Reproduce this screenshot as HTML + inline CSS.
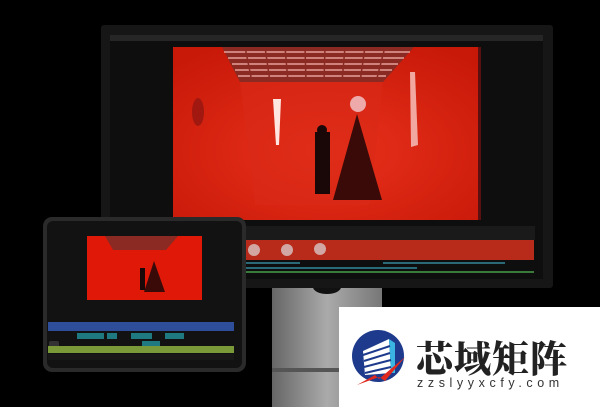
<!DOCTYPE html>
<html><head><meta charset="utf-8"><style>
html,body{margin:0;padding:0;background:#000;width:600px;height:407px;overflow:hidden}
.wm{position:absolute;left:339px;top:307px;width:261px;height:100px;background:#fff}
.t{position:absolute;left:416px;top:329px;font-family:"Liberation Serif","Noto Serif CJK SC",serif;font-weight:900;font-size:37px;color:#222;letter-spacing:1px;white-space:nowrap}
.u{position:absolute;left:417px;top:376px;font-family:"Liberation Sans",sans-serif;font-size:12.5px;color:#333;letter-spacing:4.6px;white-space:nowrap}
</style></head><body>
<svg width="600" height="407" viewBox="0 0 600 407" style="position:absolute;left:0;top:0">
<defs>
<linearGradient id="st" x1="0" x2="1"><stop offset="0" stop-color="#666"/><stop offset=".5" stop-color="#aaa"/><stop offset="1" stop-color="#777"/></linearGradient>
<radialGradient id="rd" cx=".5" cy=".6" r=".7"><stop offset="0" stop-color="#e8321c"/><stop offset="1" stop-color="#c81808"/></radialGradient>
</defs>
<rect x="272" y="287" width="110" height="120" fill="url(#st)"/>
<rect x="272" y="368" width="110" height="4" fill="#555"/>
<ellipse cx="327" cy="287" rx="14" ry="7" fill="#111"/>
<rect x="101" y="25" width="452" height="263" rx="3" fill="#161616"/>
<rect x="110" y="35" width="433" height="244" fill="#0e0e0e"/>
<rect x="110" y="35" width="433" height="6" fill="#262626"/>
<rect x="173" y="47" width="308" height="173" fill="url(#rd)"/>
<polygon points="222,47 414,47 383,82 240,82" fill="#8a2a22"/>
<g stroke="#e8a09a" stroke-width="1.4">
<line x1="224" y1="52" x2="410" y2="52"/><line x1="228" y1="58" x2="404" y2="58"/><line x1="232" y1="64" x2="398" y2="64"/><line x1="235" y1="70" x2="392" y2="70"/><line x1="238" y1="76" x2="386" y2="76"/>
</g>
<g stroke="#8a2a22" stroke-width="1.5">
<line x1="245" y1="47" x2="252" y2="82"/><line x1="265" y1="47" x2="270" y2="82"/><line x1="285" y1="47" x2="288" y2="82"/><line x1="305" y1="47" x2="306" y2="82"/><line x1="325" y1="47" x2="324" y2="82"/><line x1="345" y1="47" x2="342" y2="82"/><line x1="365" y1="47" x2="360" y2="82"/><line x1="385" y1="47" x2="376" y2="82"/>
</g>
<polygon points="240,82 383,82 370,205 255,205" fill="#d82a18" opacity=".6"/>
<polygon points="273,99 281,99 279,145 276,145" fill="#ffe6e0"/>
<circle cx="358" cy="104" r="8" fill="#eaa"/>
<polygon points="357,114 333,200 382,200" fill="#3a0a08"/>
<rect x="315" y="132" width="15" height="62" fill="#1a0808"/>
<circle cx="322" cy="130" r="5" fill="#1a0808"/>
<ellipse cx="198" cy="112" rx="6" ry="14" fill="#a01810"/>
<polygon points="410,72 415,72 418,145 411,147" fill="#f0a8a0"/>
<rect x="478" y="47" width="3" height="173" fill="#5a1010"/>
<rect x="245" y="226" width="290" height="14" fill="#1a1a1a"/>
<rect x="245" y="240" width="289" height="20" fill="#b82a1a"/>
<g fill="#ddd" opacity=".7"><circle cx="254" cy="250" r="6"/><circle cx="287" cy="250" r="6"/><circle cx="320" cy="249" r="6"/></g>
<rect x="245" y="262" width="55" height="2" fill="#2a6a78"/><rect x="383" y="262" width="122" height="2" fill="#2a6a78"/>
<rect x="245" y="267" width="172" height="2" fill="#2a6a78"/>
<rect x="245" y="271" width="289" height="2" fill="#3a7a3a"/>
<rect x="43" y="217" width="203" height="155" rx="9" fill="#2a2a2a"/>
<rect x="47" y="221" width="195" height="147" rx="6" fill="#121212"/>
<rect x="87" y="236" width="115" height="64" fill="#e01808"/>
<polygon points="105,236 178,236 166,250 113,250" fill="#8a2a22"/>
<polygon points="154,261 144,292 165,292" fill="#3a0a08"/>
<rect x="140" y="268" width="5" height="22" fill="#1a0808"/>
<rect x="48" y="322" width="186" height="9" fill="#2f4e9a"/>
<g fill="#1e7a80"><rect x="77" y="333" width="27" height="6"/><rect x="107" y="333" width="10" height="6"/><rect x="131" y="333" width="21" height="6"/><rect x="165" y="333" width="19" height="6"/><rect x="142" y="341" width="18" height="6"/></g>
<rect x="49" y="341" width="10" height="10" rx="2" fill="#333"/>
<rect x="48" y="346" width="186" height="7" fill="#7a9a3a"/>
<rect x="48" y="354" width="186" height="6" fill="#181818"/>
</svg>
<div class="wm"></div>
<svg width="60" height="60" viewBox="0 0 60 60" style="position:absolute;left:349px;top:329px">
<circle cx="29" cy="27" r="26" fill="#1e3a8c"/>
<g fill="#fff"><polygon points="14,22 40,10 42,44 16,46"/></g>
<g fill="#3ab4e0"><polygon points="40,10 46,14 46,44 42,44"/></g>
<g stroke="#1e3a8c" stroke-width="2"><line x1="14" y1="26" x2="41" y2="17"/><line x1="15" y1="32" x2="41" y2="24"/><line x1="15" y1="38" x2="42" y2="31"/><line x1="16" y1="44" x2="42" y2="38"/></g>
<polygon points="8,56 26,46 30,50 56,28 36,52 30,48" fill="#e0281e"/>
</svg>
<div class="t">芯域矩阵</div>
<div class="u">zzslyyxcfy.com</div>
</body></html>
